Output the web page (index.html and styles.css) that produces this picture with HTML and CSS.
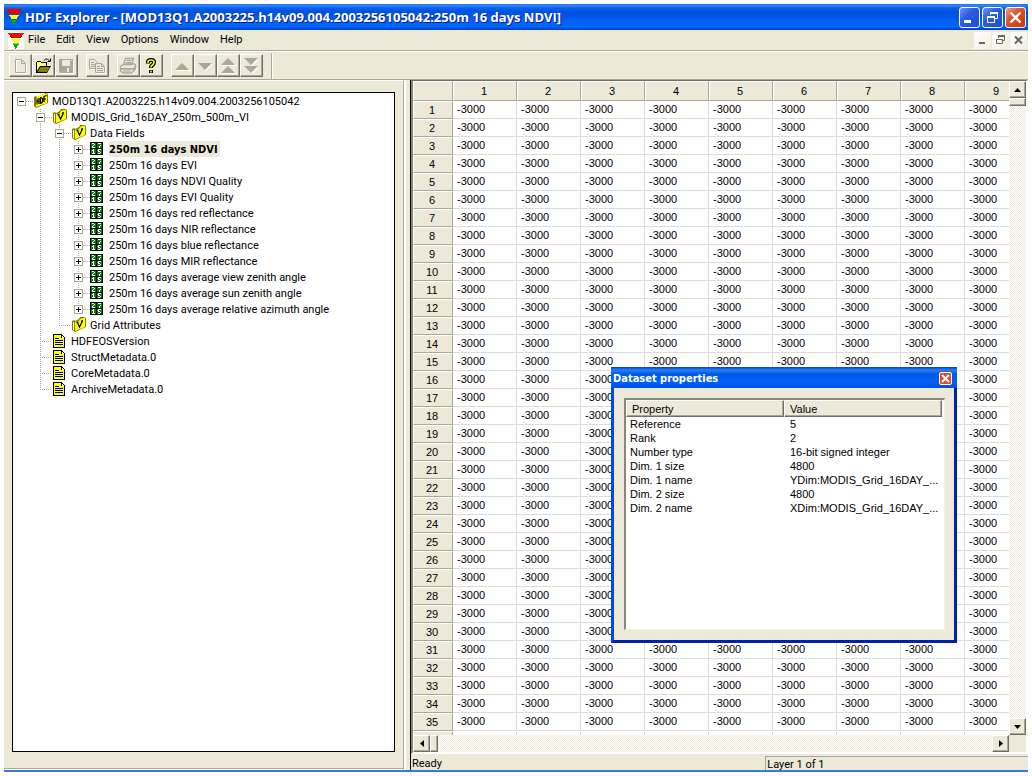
FILE: index.html
```html
<!DOCTYPE html>
<html lang="en">
<head>
<meta charset="utf-8">
<title>HDF Explorer</title>
<link rel="stylesheet" href="styles.css">
</head>
<body>
<svg class="defs" aria-hidden="true">
  <symbol id="i-app" viewBox="0 0 16 16" shape-rendering="crispEdges">
    <path fill="#f00000" d="M0 0h16v1h-1v1h-1v2h-1v1H3V4H2V2H1V1H0z"/>
    <path fill="#ffff00" d="M3 6h10v1h-1v1h-1v2H5V8H4V7H3z"/>
    <path fill="#00b020" d="M5 11h6v1h-1v1H9v2H8v1H7v-2H6v-2H5z"/>
    <path fill="#505000" d="M5 10h6v1H5z" opacity=".4"/>
  </symbol>
  <symbol id="i-hdf" viewBox="0 0 14 15">
    <path fill="#808000" d="M0 4l2-1 1 1 9-4 2 1v9L2 15l-2-2z"/>
    <path fill="#ffff00" d="M2 5l3-2 1-1 2 0 1-1 2 0 2 0v9L2 14z"/>
    <path fill="none" stroke="#000" stroke-width="1.2" d="M3 5.500v6M5 5v6M3 8.500l2-.500M6.500 4v6.500c3-.500 3-6 0-6M10 9V3.500l2.500-1M10 6.500l2-.800"/>
  </symbol>
  <symbol id="i-folder" viewBox="0 0 14 15">
    <path fill="#808000" d="M0 4l2-1 1 1 4-2 1-2 4 0 2 1v9L3 15l-3-2z"/>
    <path fill="#ffff00" d="M3 5l4-1 1-2 3-1 2 0v9L3 14z"/>
    <path fill="none" stroke="#ffffa0" stroke-width="1" d="M1.500 5v8"/>
    <path fill="none" stroke="#000" stroke-width="1.200" d="M5.500 5.500l2 4.500 3-6M4.500 5.700l2-.500M9 4.300l2-.700"/>
  </symbol>
  <symbol id="i-data" viewBox="0 0 13 13" shape-rendering="crispEdges">
    <path fill="#000" d="M0 0h13v13H0z"/>
    <path fill="#008000" d="M1 1h5v5H1zM7 1h5v5H7zM1 7h5v5H1zM7 7h5v5H7z"/>
    <path fill="#fff" d="M2 1h2v1H2zM4 2h1v1H4zM3 3h1v1H3zM2 4h1v1H2zM2 5h3v1H2zM8 1h3v2h-1v1H9v2h1V4h1V2H8zM3 7h1v4h1v1H2v-1h1V9H2V8h1zM8 7h3v1H9v1h1v1h1v1h-1v1H8v-1h2v-1H8z"/>
  </symbol>
  <symbol id="i-doc" viewBox="0 0 12 14" shape-rendering="crispEdges">
    <path fill="#000" d="M0 0h9v1h1v1h1v1h1v11H0z"/>
    <path fill="#ffff00" d="M1 1h7v3h3v9H1z"/>
    <path fill="#fff" d="M9 2h1v1h1v1H9z"/>
    <path fill="#000" d="M2 4h4v1H2zM2 6h8v1H2zM2 8h8v1H2zM2 10h8v1H2z"/>
  </symbol>
</svg>

<div class="window">
  <header class="titlebar">
    <svg class="app-icon"><use href="#i-app"/></svg>
    <h1 class="title">HDF Explorer - [MOD13Q1.A2003225.h14v09.004.2003256105042:250m 16 days NDVI]</h1>
    <div class="caption-buttons">
      <button class="cap" aria-label="Minimize"><svg viewBox="0 0 19 19"><path fill="#fff" d="M4 12h7v3H4z"/></svg></button>
      <button class="cap" aria-label="Restore"><svg viewBox="0 0 19 19"><path fill="none" stroke="#fff" d="M7.500 7V4.500h7v6H12M4.500 8.500h7v6h-7z"/><path fill="#fff" d="M7 4h8v2H7zM4 8h8v2H4z"/></svg></button>
      <button class="cap cap-close" aria-label="Close"><svg viewBox="0 0 19 19"><path fill="none" stroke="#fff" stroke-width="2.400" d="M4.500 4.500l10 10M14.500 4.500l-10 10"/></svg></button>
    </div>
  </header>

  <nav class="menubar">
    <svg class="doc-icon"><use href="#i-app"/></svg>
    <button class="menu">File</button><button class="menu">Edit</button><button class="menu">View</button><button class="menu">Options</button><button class="menu">Window</button><button class="menu">Help</button>
    <div class="mdi-buttons">
      <button class="mdi" aria-label="Minimize document"><svg viewBox="0 0 17 17"><path fill="#6b685c" d="M5 10h6v2H5z"/></svg></button>
      <button class="mdi" aria-label="Restore document"><svg viewBox="0 0 17 17"><path fill="none" stroke="#6b685c" d="M6.500 6V3.500h6v5H11M4.500 7.500h6v4h-6z"/><path fill="#6b685c" d="M6 3h7v2H6zM4 7h7v1H4z"/></svg></button>
      <button class="mdi" aria-label="Close document"><svg viewBox="0 0 17 17"><path fill="none" stroke="#6b685c" stroke-width="2" d="M5 4.500l7 7M12 4.500l-7 7"/></svg></button>
    </div>
  </nav>

  <div class="toolbar">
    <div class="tools">
      <button class="tool" aria-label="New"><svg viewBox="0 0 20 20"><path fill="none" stroke="#fff" d="M6.500 4.500h6l4 4v9h-10z"/><path fill="none" stroke="#aca899" d="M5.500 3.500h6l4 4v9h-10zM11.500 3.500v4h4"/></svg></button><button class="tool" aria-label="Open"><svg viewBox="0 0 20 20"><path fill="#000" d="M3 6h1V5h4v1h6v4h4l-4 7H3z"/><path fill="#ffff66" d="M4 6h4v1h5v3H7l-3 5z"/><path fill="#808000" d="M7.500 11h9.500l-3 5H4.500z"/><path fill="none" stroke="#000" d="M11 4.500c1-2 4-2 5.500.500M17.500 2.500v3h-3"/></svg></button><button class="tool" aria-label="Save"><svg viewBox="0 0 20 20"><path fill="#fff" d="M4 4h14v14H4z"/><path fill="#aca899" d="M3 3h14v14H4l-1-1z"/><path fill="#ece9d8" d="M6 4h8v6H6zM11 12h2v4h-2zM15 4h1v1h-1z"/></svg></button>
    </div>
    <div class="tools">
      <button class="tool" aria-label="Copy"><svg viewBox="0 0 20 20"><path fill="none" stroke="#fff" d="M3.500 13.500h5M9.500 17.500h9v-8"/><path fill="#ece9d8" stroke="#aca899" d="M2.500 3.500h5l3 3v6h-8z"/><path fill="none" stroke="#aca899" d="M4 6.500h3M4 8.500h4M4 10.500h4"/><path fill="#ece9d8" stroke="#aca899" d="M8.500 7.500h6l3 3v6h-9zM14.500 7.500v3h3M10 10.500h3M10 12.500h6M10 14.500h6"/></svg></button>
    </div>
    <div class="tools">
      <button class="tool" aria-label="Print"><svg viewBox="0 0 20 20"><path fill="#fff" d="M5 17h12v1H5zM18 9h1v6h-1z"/><path fill="#ece9d8" stroke="#aca899" stroke-width="1.300" d="M7.500 2.500h8l-2 6h-8zM2.500 10.500l3-2.500h11l1.500 2-2.500 3h-13zM2.500 11v4l3 2h8l4-4v-3"/><path fill="none" stroke="#aca899" d="M8.500 4.500h5M8 6.500h5M3 12.500h12M5 15h8"/></svg></button><button class="tool" aria-label="Help"><svg viewBox="0 0 20 20"><path fill="none" stroke="#000" stroke-width="4" d="M7 7.500V6q0-2 3-2t3 2q0 2-1.500 3t-1.500 2v1M10 14v3"/><path fill="none" stroke="#ffff00" stroke-width="1.600" d="M7 7V6q0-2 3-2t3 2q0 2-1.500 3t-1.500 2v.500M10 14.500v2"/></svg></button>
    </div>
    <div class="tools">
      <button class="tool" aria-label="Previous"><svg viewBox="0 0 20 20"><path fill="#fff" d="M4 14h14l1 1H4z"/><path fill="#aca899" d="M3 14h14l-7-7z"/></svg></button><button class="tool" aria-label="Next"><svg viewBox="0 0 20 20"><path fill="#fff" d="M4 8h14l-7 7z"/><path fill="#aca899" d="M3 7h14l-7 7z"/></svg></button><button class="tool" aria-label="First"><svg viewBox="0 0 20 20"><path fill="#fff" d="M4 9h14v1H4zM4 17h14v1H4z"/><path fill="#aca899" d="M3 9h14l-7-7zM3 17h14l-7-7z"/></svg></button><button class="tool" aria-label="Last"><svg viewBox="0 0 20 20"><path fill="#fff" d="M4 3h14l-7 7zM4 11h14l-7 7z"/><path fill="#aca899" d="M3 2h14l-7 7zM3 10h14l-7 7z"/></svg></button>
    </div>
    <div class="tool-end"></div>
  </div>

  <main class="main">
    <section class="side">
      <div class="tree-box">
        <ul class="tree">
          <li><div class="row"><button class="exp" aria-label="Collapse"></button><i class="dots"></i><svg class="ic"><use href="#i-hdf"/></svg><span class="label">MOD13Q1.A2003225.h14v09.004.2003256105042</span></div>
            <ul>
              <li><div class="row"><button class="exp" aria-label="Collapse"></button><i class="dots"></i><svg class="ic"><use href="#i-folder"/></svg><span class="label">MODIS_Grid_16DAY_250m_500m_VI</span></div>
                <ul>
                  <li><div class="row"><button class="exp" aria-label="Collapse"></button><i class="dots"></i><svg class="ic"><use href="#i-folder"/></svg><span class="label">Data Fields</span></div>
                    <ul id="fields"></ul>
                  </li>
                  <li><div class="row"><i class="dots wide"></i><svg class="ic"><use href="#i-folder"/></svg><span class="label">Grid Attributes</span></div></li>
                </ul>
              </li>
              <li><div class="row"><i class="dots wide"></i><svg class="ic doc"><use href="#i-doc"/></svg><span class="label">HDFEOSVersion</span></div></li>
              <li><div class="row"><i class="dots wide"></i><svg class="ic doc"><use href="#i-doc"/></svg><span class="label">StructMetadata.0</span></div></li>
              <li><div class="row"><i class="dots wide"></i><svg class="ic doc"><use href="#i-doc"/></svg><span class="label">CoreMetadata.0</span></div></li>
              <li><div class="row"><i class="dots wide"></i><svg class="ic doc"><use href="#i-doc"/></svg><span class="label">ArchiveMetadata.0</span></div></li>
            </ul>
          </li>
        </ul>
      </div>
    </section>
    <div class="splitter"></div>
    <section class="right">
      <div class="sheet">
        <div class="grid-view">
          <table class="grid">
            <thead><tr id="cols"><th></th></tr></thead>
            <tbody id="rows"></tbody>
          </table>
        </div>
        <div class="vbar">
          <button class="sb" aria-label="Scroll up"><svg viewBox="0 0 7 4"><path d="M0 4h7L3.500 0z"/></svg></button>
          <div class="thumb-v"></div>
          <button class="sb sb-end" aria-label="Scroll down"><svg viewBox="0 0 7 4"><path d="M0 0h7L3.500 4z"/></svg></button>
        </div>
        <div class="hbar">
          <button class="sb" aria-label="Scroll left"><svg class="side-arrow" viewBox="0 0 4 7"><path d="M4 0v7L0 3.500z"/></svg></button>
          <div class="thumb-h"></div>
          <button class="sb sb-right" aria-label="Scroll right"><svg class="side-arrow" viewBox="0 0 4 7"><path d="M0 0v7l4-3.500z"/></svg></button>
        </div>
      </div>
      <footer class="status"><span class="ready">Ready</span><span class="layer">Layer 1 of 1</span></footer>
    </section>
  </main>

  <section class="dialog" role="dialog" aria-labelledby="dlg-title">
    <header class="dialog-bar">
      <h2 class="dialog-title" id="dlg-title">Dataset properties</h2>
      <button class="dialog-close" aria-label="Close dialog"><svg viewBox="0 0 11 11"><path fill="none" stroke="#fff" stroke-width="2" d="M2 2l7 7M9 2l-7 7"/></svg></button>
    </header>
    <div class="dialog-body">
      <div class="list">
        <table class="props">
          <thead><tr><th>Property</th><th>Value</th></tr></thead>
          <tbody>
            <tr><td>Reference</td><td>5</td></tr>
            <tr><td>Rank</td><td>2</td></tr>
            <tr><td>Number type</td><td>16-bit signed integer</td></tr>
            <tr><td>Dim. 1 size</td><td>4800</td></tr>
            <tr><td>Dim. 1 name</td><td>YDim:MODIS_Grid_16DAY_...</td></tr>
            <tr><td>Dim. 2 size</td><td>4800</td></tr>
            <tr><td>Dim. 2 name</td><td>XDim:MODIS_Grid_16DAY_...</td></tr>
          </tbody>
        </table>
      </div>
    </div>
  </section>
</div>
<script src="app.js"></script>
</body>
</html>
```

FILE: styles.css
```css
* { box-sizing: border-box; }
body { margin: 0; padding: 4px; height: 100vh; background: #fff; color: #000; font: 11px/16px Roboto, "Liberation Sans", sans-serif; overflow: hidden; }
button { font: inherit; color: inherit; padding: 0; margin: 0; border: 0; background: none; }
svg { display: block; }
.defs { position: absolute; width: 0; height: 0; }
.window { display: flex; flex-direction: column; height: 100%; background: #ece9d8; border-bottom: 2px solid #3a7ad6; position: relative; }

.titlebar { display: flex; align-items: center; flex: none; height: 26px; padding: 0 2px; background: linear-gradient(#0a5be8 0, #3a8eff 1px, #0a62ee 4px, #0052dd 8px, #0058ea 14px, #0066ff 20px, #0062f6 23px, #003cc8 26px); }
.app-icon { width: 16px; height: 16px; }
.title { flex: 1; margin: 0 0 0 3px; color: #fff; font: bold 13px/20px "Open Sans", sans-serif; text-shadow: 1px 1px #0a1c78; white-space: nowrap; overflow: hidden; }
.caption-buttons { display: flex; gap: 2px; }
.cap { width: 21px; height: 21px; border: 1px solid #fff; border-radius: 3px; background: linear-gradient(135deg, #6f97f2, #2a5ce0 40%, #1c4fd8); }
.cap-close { background: linear-gradient(135deg, #f0a088, #e0502c 40%, #c83a10); }

.menubar { display: flex; align-items: center; flex: none; height: 20px; padding: 0 1px 0 4px; gap: 11px; }
.doc-icon { width: 16px; height: 17px; background: #fff; margin-right: -7px; }
.mdi-buttons { display: flex; gap: 1px; margin-left: auto; }
.mdi { width: 17px; height: 17px; background: linear-gradient(135deg, #fff, #f0eee2); }

.toolbar { display: flex; gap: 8px; flex: none; height: 30px; padding: 2px 5px 0; border-top: 1px solid #aca899; box-shadow: inset 0 1px #fff, inset 0 -1px #aca899; }
.tools { display: flex; margin-top: 1px; }
.tool { width: 23px; height: 23px; border: 1px solid; border-color: #fff #716f64 #716f64 #fff; box-shadow: inset -1px -1px #aca899; }
.tool svg { width: 20px; height: 20px; }
.tool-end { width: 2px; height: 26px; border-left: 1px solid #aca899; border-right: 1px solid #fff; }

.main { display: flex; flex: 1; min-height: 0; }
.side { display: flex; flex: none; width: 400px; padding: 11px 8px 17px; border-top: 1px solid #fff; border-right: 1px solid #aca899; border-bottom: 1px solid #fff; box-shadow: inset 0 -1px #aca899; }
.tree-box { flex: 1; background: #fff; border: 1px solid #000; padding-left: 4px; }
.splitter { flex: none; width: 7px; border-left: 2px solid #fff; border-right: 1px solid #000; }

.tree, .tree ul { list-style: none; margin: 0; padding: 0; }
.tree ul { padding-left: 19px; }
.tree li { position: relative; }
.tree ul > li::before { content: ""; position: absolute; left: 4px; top: 0; bottom: 0; width: 1px; background: repeating-linear-gradient(#aca899 0 1px, transparent 1px 2px); }
.tree ul > li:last-child::before { height: 9px; bottom: auto; }
.row { display: flex; align-items: center; height: 16px; position: relative; white-space: nowrap; }
.exp { width: 9px; height: 9px; border: 1px solid #aca899; background: linear-gradient(#000, #000) center / 5px 1px no-repeat, #fff; }
.exp.plus { background: linear-gradient(#000, #000) center / 5px 1px no-repeat, linear-gradient(#000, #000) center / 1px 5px no-repeat, #fff; }
.dots { width: 7px; height: 1px; background: repeating-linear-gradient(90deg, #aca899 0 1px, transparent 1px 2px); }
.dots.wide { width: 12px; margin-left: 4px; }
.ic { width: 14px; height: 15px; margin: 0 4px 1px 1px; }
.ic.doc { width: 12px; height: 14px; margin: 0 6px 1px 1px; }
.ic.data { width: 13px; height: 13px; margin: 0 6px 1px 0; }
.label { padding: 1px 2px 0 0; line-height: 15px; }
.label.sel { font: bold 11px/15px "DejaVu Sans Condensed", "DejaVu Sans", sans-serif; font-stretch: condensed; background: #ece9d8; }

.right { display: flex; flex-direction: column; flex: 1; min-width: 0; }
.sheet { display: grid; grid-template: minmax(0, 1fr) 17px / minmax(0, 1fr) 17px; flex: 1; min-height: 0; border: solid; border-width: 1px 2px 2px; border-color: #716f64 #fff #fff #8a877a; }
.grid-view { overflow: hidden; background: #fff; font: 11px/15px "Liberation Sans", Arial, sans-serif; }
.grid { table-layout: fixed; width: 616px; border-collapse: separate; border-spacing: 0; }
.grid th { font-weight: normal; padding: 1px 2px 0 0; width: 40px; height: 18px; text-align: center; background: #ece9d8; border: 1px solid; border-color: #fff #aca899 #aca899 #fff; }
.grid thead th { width: 64px; height: 20px; }
.grid thead th:first-child { width: 40px; }
.grid td { height: 18px; padding: 0 0 0 4px; border: solid #dcdcdc; border-width: 0 1px 1px 0; }
.vbar, .hbar { display: flex; background: repeating-conic-gradient(#fff 0 25%, #ece9d8 0 50%) 0 0 / 2px 2px; }
.vbar { flex-direction: column; }
.sb { display: grid; place-items: center; flex: none; width: 17px; height: 17px; background: #ece9d8; border: 1px solid; border-color: #fff #716f64 #716f64 #fff; box-shadow: inset -1px -1px #aca899; }
.sb svg { width: 7px; height: 4px; }
.sb .side-arrow { width: 4px; height: 7px; }
.sb-end { margin-top: auto; }
.sb-right { margin-left: auto; }
.thumb-v, .thumb-h { background: #ece9d8; border: 1px solid; border-color: #fff #716f64 #716f64 #fff; box-shadow: inset -1px -1px #aca899; }
.thumb-v { height: 8px; }
.thumb-h { width: 8px; }
.status { display: flex; flex: none; height: 16px; padding-top: 2px; }
.ready { flex: 355; padding-left: 1px; line-height: 16px; }
.layer { flex: 262; padding-left: 1px; line-height: 15px; border: solid #aca899; border-width: 1px 0 0 1px; }

.dialog { position: absolute; left: 607px; top: 363px; width: 346px; height: 276px; display: flex; flex-direction: column; background: #ece9d8; border: solid; border-width: 0 3px 3px; border-color: #0048e8 #0020b0 #0020b0 #0048e8; font: 11px/14px "Liberation Sans", Arial, sans-serif; }
.dialog-bar { display: flex; align-items: center; justify-content: space-between; flex: none; height: 21px; margin: 0 -3px; padding: 2px 5px 0 2px; background: linear-gradient(#0040c8, #2a80f8 3px, #0058e8 7px, #0060f8 15px, #0050e0); }
.dialog-title { margin: 0; color: #fff; font: bold 11px/16px "DejaVu Sans Condensed", "DejaVu Sans", sans-serif; font-stretch: condensed; }
.dialog-close { display: grid; place-items: center; width: 13px; height: 13px; border: 1px solid #fff; border-radius: 2px; background: #dc4c28; }
.dialog-close svg { width: 11px; height: 11px; }
.dialog-body { flex: 1; display: flex; padding: 10px 9px 10px 10px; }
.list { flex: 1; background: #fff; border: solid; border-width: 2px 1px 1px 2px; border-color: #8a877a #f4f2e8 #f4f2e8 #8a877a; }
.props { table-layout: fixed; width: 316px; border-collapse: separate; border-spacing: 0; }
.props th { height: 17px; padding: 1px 5px 0; font-weight: normal; text-align: left; background: #ece9d8; border: 1px solid; border-color: #fff #716f64 #716f64 #fff; box-shadow: inset -1px -1px #aca899; }
.props td { height: 14px; padding: 0 4px; white-space: nowrap; }
.props td + td { padding: 0 0 0 6px; }
```

FILE: app.js
```js
const fields = ['NDVI', 'EVI', 'NDVI Quality', 'EVI Quality', 'red reflectance', 'NIR reflectance', 'blue reflectance', 'MIR reflectance', 'average view zenith angle', 'average sun zenith angle', 'average relative azimuth angle'];
document.getElementById('fields').innerHTML = fields.map((name, i) =>
  `<li><div class="row"><button class="exp plus" aria-label="Expand"></button><i class="dots"></i><svg class="ic data"><use href="#i-data"/></svg><span class="label${i === 0 ? ' sel' : ''}">250m 16 days ${name}</span></div></li>`
).join('');

const columns = [1, 2, 3, 4, 5, 6, 7, 8, 9];
document.getElementById('cols').innerHTML += columns.map(c => `<th scope="col">${c}</th>`).join('');

let rows = '';
for (let r = 1; r <= 35; r++) {
  rows += `<tr><th scope="row">${r}</th>${columns.map(() => '<td>-3000</td>').join('')}</tr>`;
}
rows += `<tr><th></th>${columns.map(() => '<td></td>').join('')}</tr>`;
document.getElementById('rows').innerHTML = rows;
```
